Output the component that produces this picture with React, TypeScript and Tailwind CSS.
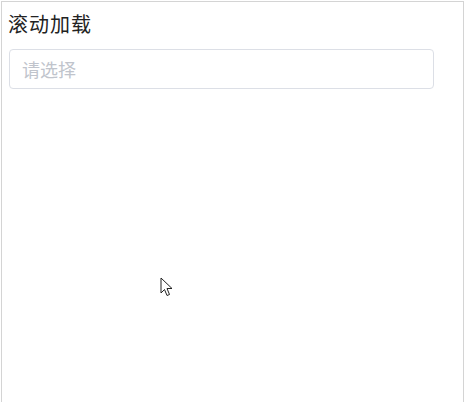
import React from 'react';

const Cursor: React.FC = () => (
  <svg width="14" height="21" viewBox="0 0 14 21" className="absolute left-[160px] top-[277px]">
    <path
      d="M1 1 L1 16 L4.5 12.5 L7 18.5 L9.5 17.5 L7 11.5 L12 11.5 Z"
      fill="#ffffff"
      stroke="#222222"
      strokeWidth="1"
      strokeLinejoin="round"
    />
  </svg>
);

export default function App() {
  return (
    <div className="relative h-[402px] w-[465px] overflow-hidden bg-white">
      <div
        className="ml-[1px] mt-[1px] h-[420px] w-[463px] border border-[#d4d4d4] bg-white pl-[6px] pr-[28px] pt-[11px]"
        style={{ fontFamily: '"Noto Sans CJK SC", "Noto Sans", sans-serif' }}
      >
        <div className="text-[20px] leading-[22px] tracking-[1px] text-[#222]">滚动加载</div>
        <div className="mt-[14px] ml-[1px] flex h-[40px] w-[425px] items-center rounded-[4px] border border-[#dcdfe6] px-[12px]">
          <span className="text-[18px] text-[#c0c4cc]">请选择</span>
        </div>
      </div>
      <Cursor />
    </div>
  );
}
